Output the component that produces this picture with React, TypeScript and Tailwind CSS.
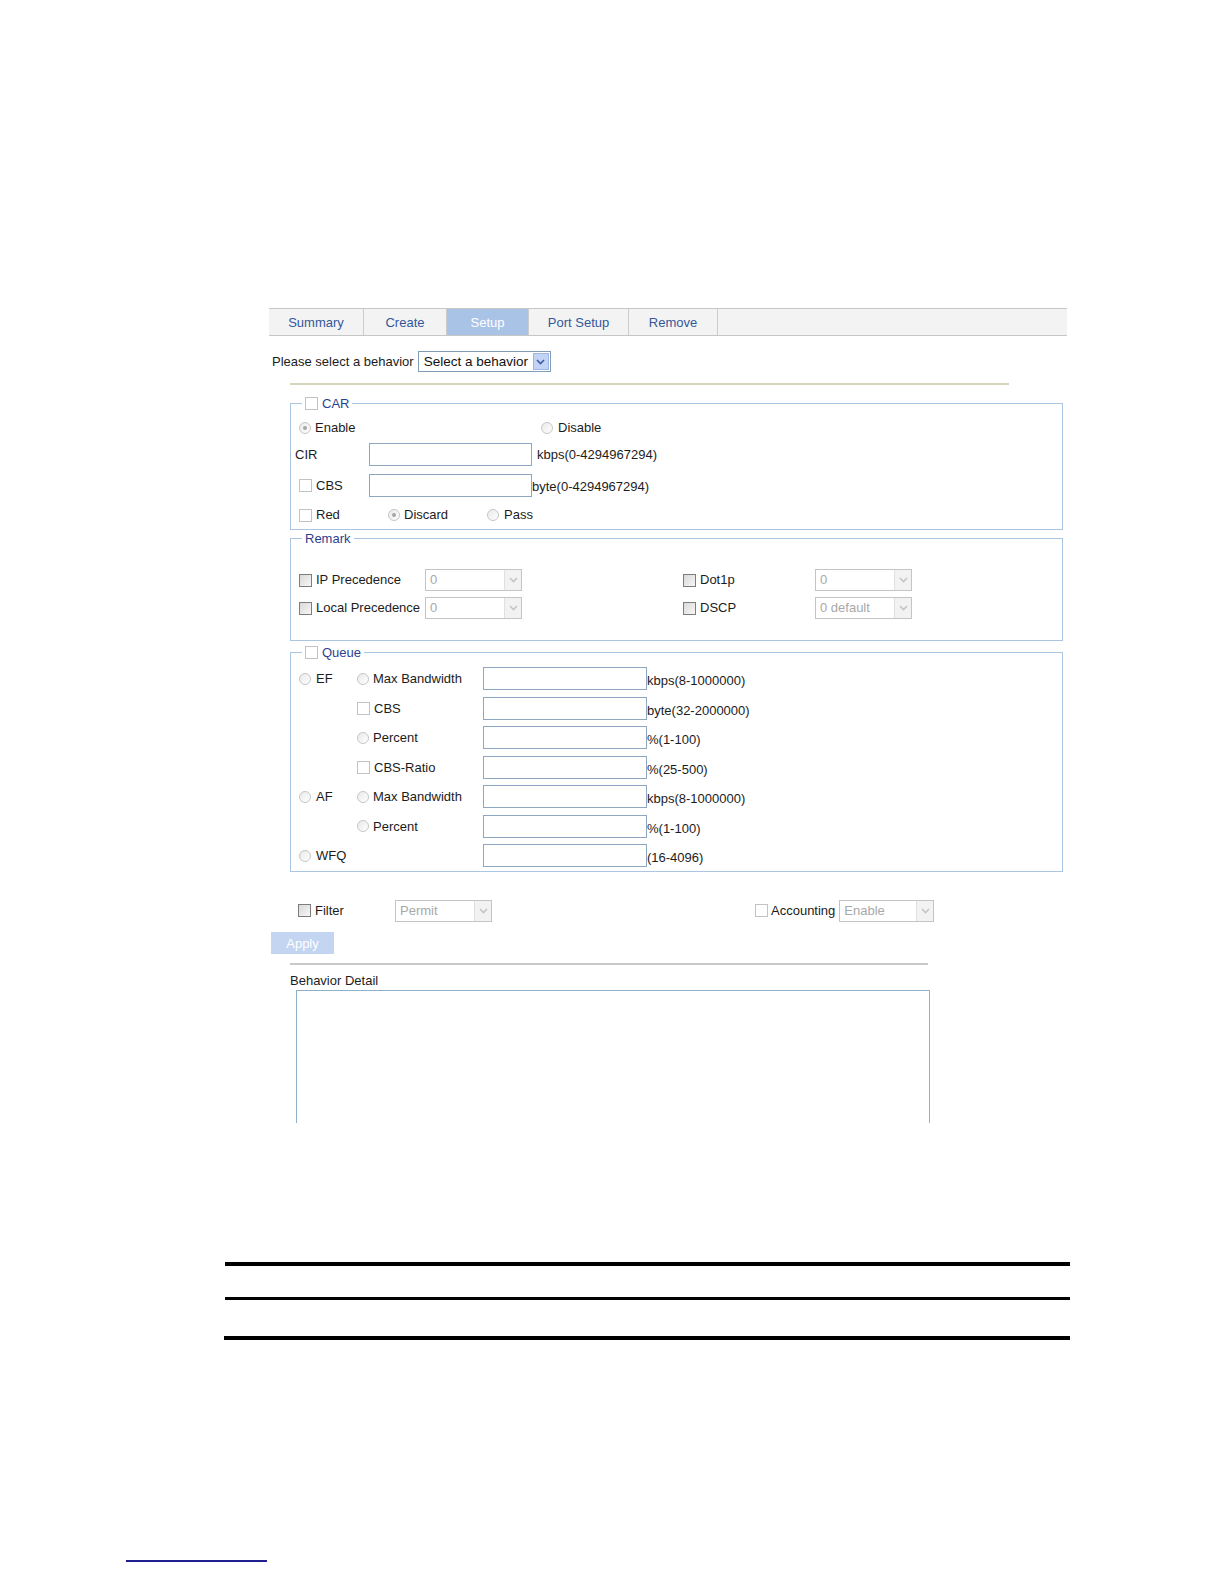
import React from "react";

const FONT = "font-['Liberation_Sans',Arial,sans-serif]";

function Radio({ checked = false }: { checked?: boolean }) {
  return (
    <span className="w-[12px] h-[12px] shrink-0 rounded-full border border-[#c6c6c6] bg-gradient-to-br from-[#e9e9e9] to-white flex items-center justify-center">
      {checked && <span className="w-[4px] h-[4px] rounded-full bg-[#a6a6a6]" />}
    </span>
  );
}

function Check({ dark = false }: { dark?: boolean }) {
  return dark ? (
    <span className="w-[13px] h-[13px] shrink-0 border border-[#7d7d7d] bg-gradient-to-br from-[#d9d9d9] to-[#f7f7f7]" />
  ) : (
    <span className="w-[13px] h-[13px] shrink-0 border border-[#c3c3c3] bg-white" />
  );
}

function TextBox({ w = "w-[163px]" }: { w?: string }) {
  return <span className={`${w} h-[23px] shrink-0 border border-[#8fa6c1] bg-white`} />;
}

function Chevron({ color }: { color: string }) {
  return (
    <svg width="9" height="6" viewBox="0 0 9 6">
      <path d="M1 1 L4.5 4.5 L8 1" fill="none" stroke={color} strokeWidth="1.6" />
    </svg>
  );
}

function DisabledSelect({ value, w = "w-[97px]" }: { value: string; w?: string }) {
  return (
    <span className={`${w} h-[22px] shrink-0 border border-[#c4c4c4] bg-white flex items-stretch`}>
      <span className="flex-1 pl-[4px] text-[#a8a8a8] leading-[20px] whitespace-nowrap">{value}</span>
      <span className="w-[17px] border-l border-[#e0e0e0] bg-[#f2f2f2] flex items-center justify-center">
        <Chevron color="#c4c4c4" />
      </span>
    </span>
  );
}

function Legend({ children }: { children: React.ReactNode }) {
  return (
    <legend className="ml-[11px] px-[3px] h-[17px] flex items-center gap-[4px] text-[#2c3f8f]">
      {children}
    </legend>
  );
}

function QueueRow({
  first,
  second,
  unit,
}: {
  first?: React.ReactNode;
  second?: React.ReactNode;
  unit: string;
}) {
  return (
    <div className="h-[29.5px] flex items-center">
      <span className="w-[66px] shrink-0 pl-[8px] flex items-center gap-[5px]">{first}</span>
      <span className="w-[126px] shrink-0 flex items-center gap-[4px]">{second}</span>
      <TextBox w="w-[164px]" />
      <span className="pt-[4px] whitespace-nowrap">{unit}</span>
    </div>
  );
}

export default function App() {
  const tabs = [
    { label: "Summary", w: "w-[95px]" },
    { label: "Create", w: "w-[83px]" },
    { label: "Setup", w: "w-[82px]", active: true },
    { label: "Port Setup", w: "w-[100px]" },
    { label: "Remove", w: "w-[89px]" },
  ];

  return (
    <div className={`w-full h-[1584px] overflow-hidden bg-white ${FONT} text-[13px] text-[#1c1c1c] pt-[308px]`}>
      <div className="ml-[269px] w-[798px]">
        {/* Tabs */}
        <div className="h-[28px] border-y border-[#c6c6c6] bg-[#f3f3f3] flex">
          {tabs.map((t) => (
            <div
              key={t.label}
              className={`${t.w} border-r border-[#cccccc] flex items-center justify-center pt-[2px] ${
                t.active ? "bg-[#a9c3e7] text-white" : "text-[#34589a]"
              }`}
            >
              {t.label}
            </div>
          ))}
        </div>

        {/* Behavior select */}
        <div className="mt-[15px] h-[21px] flex items-center">
          <span className="ml-[3px] mr-[4px] whitespace-nowrap">Please select a behavior</span>
          <span className="w-[133px] h-[21px] border border-[#7f9db9] bg-white flex items-stretch">
            <span className="flex-1 pl-[5px] text-[13.5px] leading-[19px] text-[#111] whitespace-nowrap">Select a behavior</span>
            <span className="w-[16px] m-[1px] bg-[#c3d3f5] border border-[#9fb6e3] flex items-center justify-center">
              <Chevron color="#3a5ba8" />
            </span>
          </span>
        </div>

        <div className="ml-[21px] mt-[11px] w-[719px] h-[2px] bg-[#d8d5bd]" />

        {/* CAR */}
        <fieldset className="ml-[21px] mt-[10px] w-[773px] border border-[#aac6e2] p-0">
          <Legend>
            <Check />
            <span>CAR</span>
          </Legend>
          <div className="mt-[5px] h-[22px] flex items-center">
            <span className="w-[250px] shrink-0 pl-[8px] flex items-center gap-[4px]">
              <Radio checked />
              <span>Enable</span>
            </span>
            <Radio />
            <span className="ml-[5px]">Disable</span>
          </div>
          <div className="h-[31px] flex items-center">
            <span className="w-[78px] shrink-0 pl-[4px]">CIR</span>
            <TextBox />
            <span className="ml-[5px]">kbps(0-4294967294)</span>
          </div>
          <div className="h-[31px] flex items-center">
            <span className="w-[78px] shrink-0 pl-[8px] flex items-center gap-[4px]">
              <Check />
              <span>CBS</span>
            </span>
            <TextBox />
            <span className="pt-[3px]">byte(0-4294967294)</span>
          </div>
          <div className="h-[28px] flex items-center">
            <span className="w-[97px] shrink-0 pl-[8px] flex items-center gap-[4px]">
              <Check />
              <span>Red</span>
            </span>
            <span className="w-[99px] shrink-0 flex items-center gap-[4px]">
              <Radio checked />
              <span>Discard</span>
            </span>
            <Radio />
            <span className="ml-[5px]">Pass</span>
          </div>
        </fieldset>

        {/* Remark */}
        <fieldset className="ml-[21px] w-[773px] border border-[#aac6e2] p-0">
          <Legend>
            <span>Remark</span>
          </Legend>
          <div className="mt-[22px] h-[22px] flex items-center">
            <span className="w-[134px] shrink-0 pl-[8px] flex items-center gap-[4px]">
              <Check dark />
              <span>IP Precedence</span>
            </span>
            <DisabledSelect value="0" />
            <span className="ml-[161px] w-[132px] shrink-0 flex items-center gap-[4px]">
              <Check dark />
              <span>Dot1p</span>
            </span>
            <DisabledSelect value="0" />
          </div>
          <div className="mt-[6px] mb-[21px] h-[22px] flex items-center">
            <span className="w-[134px] shrink-0 pl-[8px] flex items-center gap-[4px]">
              <Check dark />
              <span className="whitespace-nowrap">Local Precedence</span>
            </span>
            <DisabledSelect value="0" />
            <span className="ml-[161px] w-[132px] shrink-0 flex items-center gap-[4px]">
              <Check dark />
              <span>DSCP</span>
            </span>
            <DisabledSelect value="0 default" />
          </div>
        </fieldset>

        {/* Queue */}
        <fieldset className="ml-[21px] mt-[3px] w-[773px] border border-[#aac6e2] p-0">
          <Legend>
            <Check />
            <span>Queue</span>
          </Legend>
          <div className="mt-[3px]">
            <QueueRow
              first={<><Radio /><span>EF</span></>}
              second={<><Radio /><span>Max Bandwidth</span></>}
              unit="kbps(8-1000000)"
            />
            <QueueRow second={<><Check /><span>CBS</span></>} unit="byte(32-2000000)" />
            <QueueRow second={<><Radio /><span>Percent</span></>} unit="%(1-100)" />
            <QueueRow second={<><Check /><span>CBS-Ratio</span></>} unit="%(25-500)" />
            <QueueRow
              first={<><Radio /><span>AF</span></>}
              second={<><Radio /><span>Max Bandwidth</span></>}
              unit="kbps(8-1000000)"
            />
            <QueueRow second={<><Radio /><span>Percent</span></>} unit="%(1-100)" />
            <QueueRow first={<><Radio /><span>WFQ</span></>} unit="(16-4096)" />
          </div>
        </fieldset>

        {/* Filter / Accounting */}
        <div className="mt-[28px] h-[22px] flex items-center">
          <span className="w-[126px] shrink-0 pl-[29px] flex items-center gap-[4px]">
            <Check dark />
            <span>Filter</span>
          </span>
          <DisabledSelect value="Permit" />
          <span className="ml-[263px] flex items-center gap-[3px] mr-[4px]">
            <Check />
            <span>Accounting</span>
          </span>
          <DisabledSelect value="Enable" w="w-[95px]" />
        </div>

        <div className="mt-[10px] ml-[2px] w-[63px] h-[22px] bg-[#c4d5f1] text-white flex items-center justify-center pt-[2px]">
          Apply
        </div>

        <div className="ml-[21px] mt-[9px] w-[638px] h-[2px] bg-[#c9c9c9]" />

        <div className="ml-[21px] mt-[6px]">Behavior Detail</div>
        <div className="ml-[27px] w-[634px] h-[133px] border border-b-0 border-[#8fb0c9] bg-white" />
      </div>

      {/* Document rules */}
      <div className="ml-[225px] mt-[139px] w-[845px] h-[4px] bg-black" />
      <div className="ml-[225px] mt-[31px] w-[845px] h-[3px] bg-black" />
      <div className="ml-[224px] mt-[36px] w-[846px] h-[4px] bg-black" />

      <div className="ml-[126px] mt-[220px] w-[141px] h-[2px] bg-[#1f1f8f]" />
    </div>
  );
}
